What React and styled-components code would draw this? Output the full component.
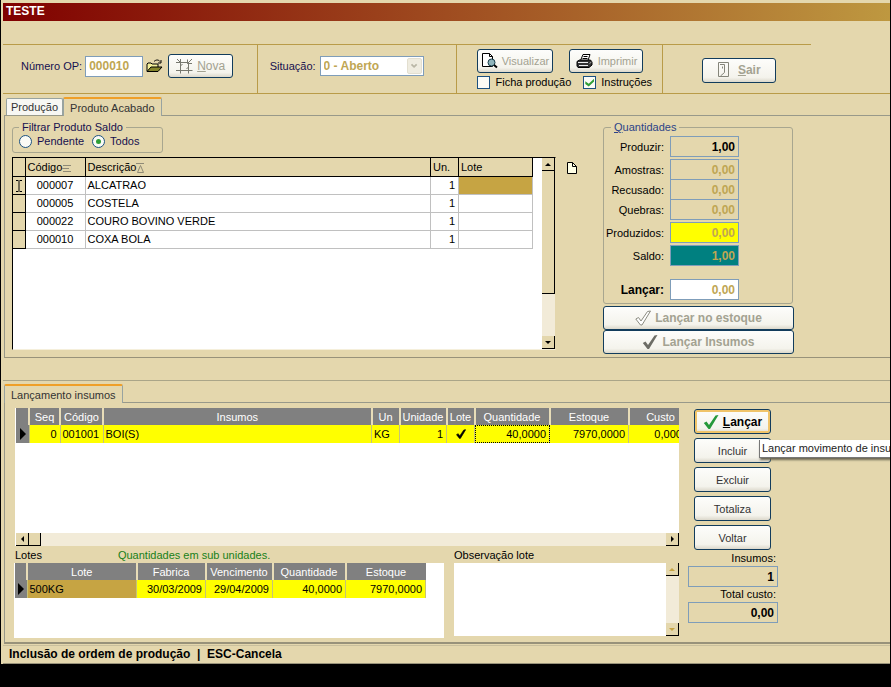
import React from "react";
import styled, {createGlobalStyle, css} from "styled-components";

const sans = `"Liberation Sans", Arial, sans-serif`;
const sand = "#e4d7ad";
const gold = "#c6a443";
const goldText = "#bfa653";

const GlobalStyle = createGlobalStyle`
	* {
		box-sizing: border-box;
	}
	body {
		margin: 0;
		background: #000;
		overflow-x: hidden;
	}
	button, input, select, textarea {
		font: inherit;
		margin: 0;
	}
`;

const Window = styled.div`
	margin: 0 1px;
	padding: 3px 0 0 2px;
	background: ${sand};
	color: #000;
	font: 11px/14px ${sans};
	overflow: hidden;
`;

const TitleBar = styled.h1`
	margin: 0;
	padding: 0 3px;
	height: 18px;
	background: linear-gradient(90deg, #800000, #be9840);
	color: #fff;
	font: bold 12px/17px ${sans};
`;

const Toolbar = styled.header`
	display: grid;
	grid-template-columns: 255fr 200fr 206fr 148fr 79fr;
	height: 50px;
	margin-top: 23px;
	border-bottom: 1px solid #b99b48;
`;

const Section = styled.div`
	display: flex;
	align-items: ${(props) => props.$align || "center"};
	gap: ${(props) => props.$gap || "4px"};
	padding: ${(props) => props.$pad};
	border-top: 1px solid #b99b48;
	border-right: ${(props) => (props.$last ? "none" : "1px solid #b99b48")};
`;

const Label = styled.label`
	color: ${(props) => props.$color || "#000"};
	white-space: nowrap;
	font-weight: ${(props) => (props.$bold ? "bold" : "normal")};
	font-size: ${(props) => (props.$bold ? "12px" : "11px")};
`;

const Field = styled.input`
	width: ${(props) => props.$width};
	height: 21px;
	padding: 0 3px;
	border: 1px solid #7f9db9;
	border-radius: 0;
	background: ${(props) => props.$bg || "transparent"};
	color: ${(props) => props.$color || goldText};
	font: bold 12px/18px ${sans};
	text-align: ${(props) => props.$align || "right"};
	outline: none;
`;

const SelectWrap = styled.div`
	display: grid;
	grid-template-columns: 1fr 15px;
	align-items: center;
	width: 104px;
	height: 20px;
	padding-right: 1px;
	border: 1px solid #7f9db9;
	background: #fff;
	select {
		appearance: none;
		border: 0;
		padding: 0 3px;
		background: #fff;
		color: ${goldText};
		font: bold 12px/16px ${sans};
		opacity: 1;
	}
	svg {
		background: #efece0;
		border: 1px solid #e3dfd0;
		border-radius: 2px;
	}
`;

const IconButton = styled.button`
	display: flex;
	align-items: center;
	justify-content: center;
	padding: 0;
	border: 0;
	background: none;
`;

const Button = styled.button`
	display: flex;
	align-items: center;
	justify-content: center;
	gap: ${(props) => props.$gap || "4px"};
	width: ${(props) => props.$width || "100%"};
	height: ${(props) => props.$height || "25px"};
	padding: 0;
	border: 1px solid #123c5c;
	border-radius: 3px;
	background: linear-gradient(#fdfdfb, #f4f3ec 80%, #dcd8cb);
	color: ${(props) => (props.disabled ? "#a3a291" : "#333")};
	font-size: ${(props) => (props.$bold ? "12px" : "11px")};
	font-weight: ${(props) => (props.$bold ? "bold" : "normal")};
	white-space: nowrap;
	svg {
		flex: none;
	}
	${(props) =>
		props.$hot &&
		css`
			color: #000;
			box-shadow: inset 0 0 0 2px #f0c469;
		`}
`;

const NewButton = styled(Button)`
	margin-left: 2px;
	font-size: 12px;
`;

const PrintOptions = styled.div`
	display: grid;
	grid-template-columns: 76px 74px;
	gap: 3px 16px;
	align-content: start;
	white-space: nowrap;
`;

const Options = styled.div`
	display: flex;
	gap: 12px;
	grid-column: 1 / -1;
`;

const Option = styled.label`
	display: flex;
	align-items: center;
	gap: 5px;
	color: ${(props) => props.$color || "#000"};
	font-size: 11px;
	line-height: 13px;
	input {
		appearance: none;
		display: grid;
		place-items: center;
		width: 13px;
		height: 13px;
		border: 1px solid #1c5180;
		background: #fbfbf6;
	}
	input[type="radio"] {
		border-radius: 50%;
	}
	input[type="radio"]:checked::after {
		content: "";
		width: 5px;
		height: 5px;
		border-radius: 50%;
		background: #2f9e36;
	}
	input[type="checkbox"]:checked::after {
		content: "";
		width: 9px;
		height: 8px;
		background: #2f9e36;
		clip-path: polygon(0 35%, 38% 65%, 100% 0, 100% 35%, 38% 100%, 0 70%);
	}
`;

const Tabs = styled.nav`
	display: flex;
	align-items: flex-end;
	padding-left: ${(props) => props.$left};
	margin-left: 1px;
	height: 17px;
	margin-top: 4px;
`;

const Tab = styled.button`
	height: ${(props) => (props.$active ? "19px" : "17px")};
	margin-bottom: ${(props) => (props.$active ? "-1px" : "0")};
	padding: 0 ${(props) => props.$pad || "6px"};
	border: 1px solid #98a3a0;
	border-bottom: 0;
	border-radius: 2px 2px 0 0;
	background: #f7f7f3;
	color: #333;
	line-height: 16px;
	white-space: nowrap;
	z-index: 1;
	${(props) =>
		props.$active &&
		css`
			background: ${sand};
			border-top: 2px solid #ef9f28;
		`}
`;

const Panel = styled.main`
	display: flex;
	align-items: flex-start;
	margin-left: 1px;
	padding: ${(props) => props.$pad};
	border-top: 1px solid #98998a;
	border-left: 1px solid #98998a;
	border-bottom: ${(props) => props.$edge || "1px"} solid #98927a;
`;

const Divider = styled.hr`
	height: 1px;
	margin: 22px 0 0;
	border: 0;
	background: #aaa588;
`;

const Grow = styled.div`
	flex: 1;
	min-width: 0;
`;

const Group = styled.fieldset`
	width: ${(props) => props.$width};
	margin: 0;
	padding: ${(props) => props.$pad};
	border: 1px solid #a8a68f;
	border-radius: 3px;
	legend {
		padding: 0 3px;
		margin-left: ${(props) => props.$inset || "0"};
		color: ${(props) => props.$color};
		line-height: 12px;
	}
`;

const Filters = styled.div`
	display: flex;
	gap: 8px;
`;

const GridBox = styled.div`
	display: flex;
	height: 193px;
	margin-top: 4px;
	border: 1px solid #000;
	border-right-color: ${sand};
	border-bottom-color: #f5efdb;
	background: #fff;
`;

const Table = styled.table`
	table-layout: fixed;
	width: 100%;
	border-collapse: collapse;
	font-size: 11px;
	th, td {
		height: 18px;
		padding: 0 2px;
		line-height: 16px;
		font-weight: normal;
		white-space: nowrap;
		overflow: hidden;
		text-align: left;
	}
	td.num {
		text-align: right;
		padding-right: 3px;
	}
	td.mid {
		text-align: center;
	}
`;

const ProductTable = styled(Table)`
	th {
		background: ${sand};
		border: 1px solid #000;
		border-width: 0 1px 1px 0;
	}
	td {
		border: 1px solid #c0c0c0;
		border-width: 0 1px 1px 0;
	}
	td.mark {
		padding: 0;
		background: ${sand};
		border-color: #000;
	}
	td.picked {
		background: ${gold};
	}
	th svg, td svg {
		vertical-align: middle;
	}
`;

const InputTable = styled(Table)`
	width: ${(props) => props.$width};
	th {
		height: 17px;
		background: #808080;
		color: #fff;
		text-align: center;
		border-right: 2px solid #e8ddb8;
	}
	th:last-child {
		border-right: 0;
	}
	td {
		background: #ff0;
		border-right: 1px solid #c5c27a;
	}
	td.mark {
		padding: 0;
		background: #808080;
	}
	td.picked {
		background: ${gold};
	}
	td.focus {
		outline: 1px dotted #000;
		outline-offset: -1px;
	}
	td svg {
		display: block;
		margin: 0 auto;
	}
`;

const VScroll = styled.div`
	display: flex;
	flex-direction: column;
	justify-content: space-between;
	width: 13px;
	margin-left: ${(props) => props.$gap || "0"};
	background: #f2ebd8;
`;

const HScroll = styled.div`
	display: flex;
	height: 13px;
	background: #f2ebd8;
	> :last-child {
		margin-left: auto;
	}
`;

const ScrollButton = styled.button`
	display: grid;
	place-items: center;
	width: 13px;
	height: 13px;
	padding: 0;
	border: 0 solid #000;
	border-width: 0 1px 1px 0;
	background: ${sand};
`;

const Thumb = styled.div`
	width: ${(props) => (props.$wide ? "12px" : "13px")};
	height: ${(props) => props.$height || "13px"};
	margin-bottom: auto;
	border: 1px solid #000;
	border-width: 0 1px 1px 0;
	background: ${sand};
`;

const DocButton = styled(IconButton)`
	margin: 41px 25px 0 10px;
`;

const Side = styled.aside`
	width: ${(props) => props.$width};
	margin-right: ${(props) => props.$right};
`;

const BottomSide = styled(Side)`
	margin-left: 15px;
`;

const Amounts = styled.div`
	display: grid;
	grid-template-columns: 60px 69px;
	column-gap: 6px;
	align-items: center;
	label {
		text-align: right;
	}
`;

const AmountRow = styled.div`
	display: grid;
	grid-template-columns: subgrid;
	grid-column: 1 / -1;
	align-items: center;
	margin-top: ${(props) => props.$top || "0"};
`;

const Stack = styled.div`
	display: flex;
	flex-direction: column;
	gap: ${(props) => props.$gap};
	margin-top: ${(props) => props.$top || "0"};
`;

const Buttons = styled(Stack)`
	width: 77px;
`;

const InputGrid = styled.div`
	display: flex;
	flex-direction: column;
	justify-content: space-between;
	height: 138px;
	padding-left: 1px;
	overflow: hidden;
	background: #fff;
`;

const Lower = styled.div`
	display: grid;
	grid-template-columns: 430fr 225fr;
	gap: 10px;
	margin: 2px 0 0 -1px;
`;

const Caption = styled.div`
	display: flex;
	gap: 76px;
	height: 15px;
	padding-left: ${(props) => props.$left || "0"};
`;

const LotGrid = styled.div`
	height: 75px;
	padding-left: 1px;
	background: #fff;
`;

const NoteBox = styled.div`
	display: flex;
	height: 73px;
	textarea {
		flex: 1;
		min-width: 0;
		border: 0;
		resize: none;
		outline: none;
		background: #fff;
	}
`;

const TipAnchor = styled.div`
	position: relative;
`;

const Tip = styled.span`
	position: absolute;
	top: 2px;
	left: 65px;
	padding: 0 2px;
	border: 1px solid #777;
	border-width: 0 0 1px 1px;
	background: #fff;
	box-shadow: 1px 2px 2px #6b6653;
	color: #222;
	line-height: 17px;
	white-space: nowrap;
`;

const Totals = styled.div`
	display: flex;
	flex-direction: column;
	align-items: flex-end;
	margin: 1px -7px 0 -6px;
	label {
		padding: 0 2px;
		line-height: 15px;
	}
`;

const Status = styled.footer`
	margin-top: 1px;
	padding-left: 6px;
	border-top: 1px solid #c9bf9c;
	border-bottom: 1px solid #98927a;
	font: bold 12px/17px ${sans};
	white-space: pre;
`;

function Arrow({dir, color = "#000"}) {
	const points = {
		up: "0,5 3,2 6,5",
		down: "0,2 6,2 3,5",
		left: "5,0 2,3 5,6",
		right: "2,0 5,3 2,6",
	};
	return (
		<svg width="7" height="7" viewBox="0 0 7 7">
			<polygon points={points[dir]} fill={color} />
		</svg>
	);
}

function FolderIcon() {
	return (
		<svg width="17" height="14" viewBox="0 0 17 14">
			<path d="M1 12V5l1-1h3l1 1h6v3" fill="#f4f09a" stroke="#000" />
			<path d="M1 12.5 5 8h11l-4 4.500z" fill="#85852a" stroke="#000" />
			<path d="M8 2.500C10 .5 12.500.5 14 2.500M15 1v3h-3" fill="none" stroke="#000" />
		</svg>
	);
}

function NewIcon() {
	return (
		<svg width="17" height="17" viewBox="0 0 17 17" fill="none" stroke="#77786f">
			<path d="M4.500 1v14.500M12.500 5v10.500M0 4.500h12M0 12.500h16.500" />
			<path d="M1 1l3 3M16 1l-4.500 4.500M11.500 1.500v4h4.500M6.500 6l-2 2M10.500 11l2-2" />
		</svg>
	);
}

function PreviewIcon() {
	return (
		<svg width="16" height="16" viewBox="0 0 16 16">
			<path d="M.5.5h7l3 3v10H.5z" fill="#fff" stroke="#000" />
			<path d="M7.500.5v3h3" fill="none" stroke="#000" />
			<circle cx="9.500" cy="9.500" r="3.500" fill="#8fb4bb" stroke="#163b47" />
			<path d="M12 12l3 2.500" stroke="#000" strokeWidth="2" />
		</svg>
	);
}

function PrinterIcon() {
	return (
		<svg width="18" height="15" viewBox="0 0 18 15" stroke="#000">
			<path d="M4.500 6.500 7 .5h7l-2 6" fill="#fff" />
			<path d="M7.500 2.500h4M6.500 4.500h5" />
			<path d="M1 7.500 3.500 6h11L16 8v3l-3 2.500H2L1 12z" fill="#333" />
			<path d="M2 8.500h10M3 11.500h9" stroke="#eee" />
			<path d="M13.500 9.500l2-1.500" stroke="#aaa" />
		</svg>
	);
}

function DoorIcon() {
	return (
		<svg width="12" height="16" viewBox="0 0 12 16" fill="none" stroke="#85857a">
			<path d="M.5.5h10v14H.5z" />
			<path d="M3 2.500h3.500v8l-4 3.500M4.500 4.500v2M2 2.500h1" />
		</svg>
	);
}

function DocIcon() {
	return (
		<svg width="12" height="13" viewBox="0 0 12 13" stroke="#000">
			<path d="M1.500.5h5l4 4v7h-9z" fill="#ffffe6" />
			<path d="M6.500.5v4h4" fill="none" />
		</svg>
	);
}

function CheckIcon({fill, stroke = "none", size = 16}) {
	return (
		<svg width={size} height={size} viewBox="0 0 16 16">
			<path d="M.8 9 3.500 7.500 6 11 12.500 1.500 15.500 1 7 15H5.500z" fill={fill} stroke={stroke} />
		</svg>
	);
}

function Caret() {
	return (
		<svg width="8" height="12" viewBox="0 0 8 12" stroke="#000">
			<path d="M1 .5h2.500M4.500.5H7M1 11.500h2.500M4.500 11.500H7M4 1v10" fill="none" />
		</svg>
	);
}

function Pointer() {
	return (
		<svg width="9" height="12" viewBox="0 0 9 12">
			<path d="M2 0l6 6-6 6z" fill="#000" />
		</svg>
	);
}

const products = [
	{code: "000007", name: "ALCATRAO", un: 1},
	{code: "000005", name: "COSTELA", un: 1},
	{code: "000022", name: "COURO BOVINO VERDE", un: 1},
	{code: "000010", name: "COXA BOLA", un: 1},
];

const amounts = [
	{id: "produzir", label: "Produzir:", value: "1,00", color: "#000"},
	{id: "amostras", label: "Amostras:", value: "0,00", top: "2px"},
	{id: "recusado", label: "Recusado:", value: "0,00", top: "-1px"},
	{id: "quebras", label: "Quebras:", value: "0,00", top: "-1px"},
	{id: "produzidos", label: "Produzidos:", value: "0,00", top: "2px", bg: "#ff0"},
	{id: "saldo", label: "Saldo:", value: "1,00", top: "2px", bg: "#008080"},
	{id: "lancar", label: "Lançar:", value: "0,00", top: "13px", bg: "#fff", bold: true},
];

function Products() {
	return (
		<GridBox>
			<Grow>
				<ProductTable>
					<colgroup>
						<col width="12" />
						<col width="60" />
						<col />
						<col width="28" />
						<col width="74" />
					</colgroup>
					<thead>
						<tr>
							<th></th>
							<th>
								Código
								<svg width="9" height="8" viewBox="0 0 9 8" stroke="#8f8a76">
									<path d="M1 1.500h8M0 4.500h7M1 7.500h8" />
								</svg>
							</th>
							<th>
								Descrição
								<svg width="9" height="10" viewBox="0 0 9 10" fill="none" stroke="#8f8a76">
									<path d="M0 .5h8M1.500 9.500l3-7 3 7z" />
								</svg>
							</th>
							<th>Un.</th>
							<th>Lote</th>
						</tr>
					</thead>
					<tbody>
						{products.map((item, i) => (
							<tr key={item.code}>
								<td className="mark mid">{i === 0 && <Caret />}</td>
								<td className="mid">{item.code}</td>
								<td>{item.name}</td>
								<td className="num">{item.un}</td>
								<td className={i === 0 ? "picked" : ""}></td>
							</tr>
						))}
					</tbody>
				</ProductTable>
			</Grow>
			<VScroll $gap="9px">
				<ScrollButton aria-label="Subir">
					<Arrow dir="up" />
				</ScrollButton>
				<Thumb $height="123px" />
				<ScrollButton aria-label="Descer">
					<Arrow dir="down" />
				</ScrollButton>
			</VScroll>
		</GridBox>
	);
}

function Inputs() {
	return (
		<InputGrid>
			<InputTable $width="calc(100% + 13px)">
				<colgroup>
					<col width="13" />
					<col width="31" />
					<col width="43" />
					<col />
					<col width="28" />
					<col width="47" />
					<col width="28" />
					<col width="75" />
					<col width="79" />
					<col width="63" />
				</colgroup>
				<thead>
					<tr>
						<th></th>
						<th>Seq</th>
						<th>Código</th>
						<th>Insumos</th>
						<th>Un</th>
						<th>Unidade</th>
						<th>Lote</th>
						<th>Quantidade</th>
						<th>Estoque</th>
						<th>Custo</th>
					</tr>
				</thead>
				<tbody>
					<tr>
						<td className="mark">
							<Pointer />
						</td>
						<td className="num">0</td>
						<td>001001</td>
						<td>BOI(S)</td>
						<td>KG</td>
						<td className="num">1</td>
						<td>
							<CheckIcon fill="#000" stroke="#000" size={10} />
						</td>
						<td className="num focus">40,0000</td>
						<td className="num">7970,0000</td>
						<td className="num">0,0000</td>
					</tr>
				</tbody>
			</InputTable>
			<HScroll>
				<ScrollButton aria-label="Esquerda">
					<Arrow dir="left" />
				</ScrollButton>
				<Thumb $wide />
				<ScrollButton aria-label="Direita">
					<Arrow dir="right" />
				</ScrollButton>
			</HScroll>
		</InputGrid>
	);
}

function Lots() {
	return (
		<LotGrid>
			<InputTable $width="calc(100% - 18px)">
				<colgroup>
					<col width="12" />
					<col />
					<col width="69" />
					<col width="67" />
					<col width="73" />
					<col width="80" />
				</colgroup>
				<thead>
					<tr>
						<th></th>
						<th>Lote</th>
						<th>Fabrica</th>
						<th>Vencimento</th>
						<th>Quantidade</th>
						<th>Estoque</th>
					</tr>
				</thead>
				<tbody>
					<tr>
						<td className="mark">
							<Pointer />
						</td>
						<td className="picked">500KG</td>
						<td className="num">30/03/2009</td>
						<td className="num">29/04/2009</td>
						<td className="num">40,0000</td>
						<td className="num">7970,0000</td>
					</tr>
				</tbody>
			</InputTable>
		</LotGrid>
	);
}

export default function App() {
	return (
		<Window>
			<GlobalStyle />
			<TitleBar>TESTE</TitleBar>
			<Toolbar>
				<Section $gap="3px" $pad="0 0 6px 18px">
					<Label htmlFor="op" $color="#16104f">Número OP:</Label>
					<Field id="op" $width="58px" $bg="#fff" $align="left" defaultValue="000010" />
					<IconButton aria-label="Abrir">
						<FolderIcon />
					</IconButton>
					<NewButton disabled $width="65px" $height="24px">
						<NewIcon />
						<span><u>N</u>ova</span>
					</NewButton>
				</Section>
				<Section $pad="0 0 6px 12px">
					<Label htmlFor="sit" $color="#16104f">Situação:</Label>
					<SelectWrap>
						<select id="sit" disabled>
							<option>0 - Aberto</option>
						</select>
						<svg width="15" height="16" viewBox="0 0 15 16">
							<path d="M4 6l3 3 3-3" fill="none" stroke="#b9b6a6" strokeWidth="2" />
						</svg>
					</SelectWrap>
				</Section>
				<Section $align="flex-start" $pad="4px 0 0 20px">
					<PrintOptions>
						<Button disabled $height="24px">
							<PreviewIcon />
							Visualizar
						</Button>
						<Button disabled $height="24px">
							<PrinterIcon />
							Imprimir
						</Button>
						<Options>
							<Option>
								<input type="checkbox" />
								Ficha produção
							</Option>
							<Option>
								<input type="checkbox" defaultChecked />
								Instruções
							</Option>
						</Options>
					</PrintOptions>
				</Section>
				<Section $last $pad="2px 0 0 39px">
					<Button disabled $bold $width="74px" $gap="8px">
						<DoorIcon />
						<span><u>S</u>air</span>
					</Button>
				</Section>
			</Toolbar>

			<Tabs $left="2px">
				<Tab $pad="4px">Produção</Tab>
				<Tab $active>Produto Acabado</Tab>
			</Tabs>
			<Panel $pad="5px 0 3px 7px">
				<Grow>
					<Group $width="151px" $pad="2px 6px 4px" $inset="0" $color="#16104f">
						<legend>Filtrar Produto Saldo</legend>
						<Filters>
							<Option $color="#16104f">
								<input type="radio" name="filtro" />
								Pendente
							</Option>
							<Option $color="#16104f">
								<input type="radio" name="filtro" defaultChecked />
								Todos
							</Option>
						</Filters>
					</Group>
					<Products />
				</Grow>
				<DocButton aria-label="Novo documento">
					<DocIcon />
				</DocButton>
				<Side $width="191px" $right="96px">
					<Group $width="190px" $pad="3px 0 3px" $inset="7px" $color="#2c4488">
						<legend><u>Q</u>uantidades</legend>
						<Amounts>
							{amounts.map((item) => (
								<AmountRow key={item.id} $top={item.top}>
									<Label htmlFor={item.id} $bold={item.bold}>{item.label}</Label>
									<Field
										id={item.id}
										$width="69px"
										$bg={item.bg}
										$color={item.color}
										defaultValue={item.value}
									/>
								</AmountRow>
							))}
						</Amounts>
					</Group>
					<Stack $top="2px">
						<Button disabled $bold $height="24px">
							<CheckIcon fill="#fff" stroke="#8b8b80" />
							Lançar no estoque
						</Button>
						<Button disabled $bold $height="24px">
							<CheckIcon fill="#6d6d66" />
							Lançar Insumos
						</Button>
					</Stack>
				</Side>
			</Panel>

			<Divider />
			<Tabs $left="0">
				<Tab $active>Lançamento insumos</Tab>
			</Tabs>
			<Panel $pad="5px 0 4px 10px" $edge="2px">
				<Grow>
					<Inputs />
					<Lower>
						<div>
							<Caption $left="1px">
								<span>Lotes</span>
								<Label as="span" $color="#188018">Quantidades em sub unidades.</Label>
							</Caption>
							<Lots />
						</div>
						<div>
							<Caption>
								<Label htmlFor="obs">Observação lote</Label>
							</Caption>
							<NoteBox>
								<textarea id="obs" />
								<VScroll>
									<ScrollButton disabled aria-label="Subir">
										<Arrow dir="up" color={gold} />
									</ScrollButton>
									<ScrollButton disabled aria-label="Descer">
										<Arrow dir="down" color={gold} />
									</ScrollButton>
								</VScroll>
							</NoteBox>
						</div>
					</Lower>
				</Grow>
				<BottomSide $width="77px" $right="119px">
					<Buttons $gap="4px" $top="1px">
						<Button $hot $bold>
							<CheckIcon fill="#25983a" />
							<span><u>L</u>ançar</span>
						</Button>
						<TipAnchor>
							<Button>Incluir</Button>
							<Tip role="tooltip">Lançar movimento de insum</Tip>
						</TipAnchor>
						<Button>Excluir</Button>
						<Button>Totaliza</Button>
						<Button>Voltar</Button>
					</Buttons>
					<Totals>
						<Label htmlFor="insumos">Insumos:</Label>
						<Field id="insumos" $width="90px" $color="#000" defaultValue="1" />
						<Label htmlFor="custo">Total custo:</Label>
						<Field id="custo" $width="90px" $color="#000" defaultValue="0,00" />
					</Totals>
				</BottomSide>
			</Panel>
			<Status>Inclusão de ordem de produção  |  ESC-Cancela</Status>
		</Window>
	);
}
